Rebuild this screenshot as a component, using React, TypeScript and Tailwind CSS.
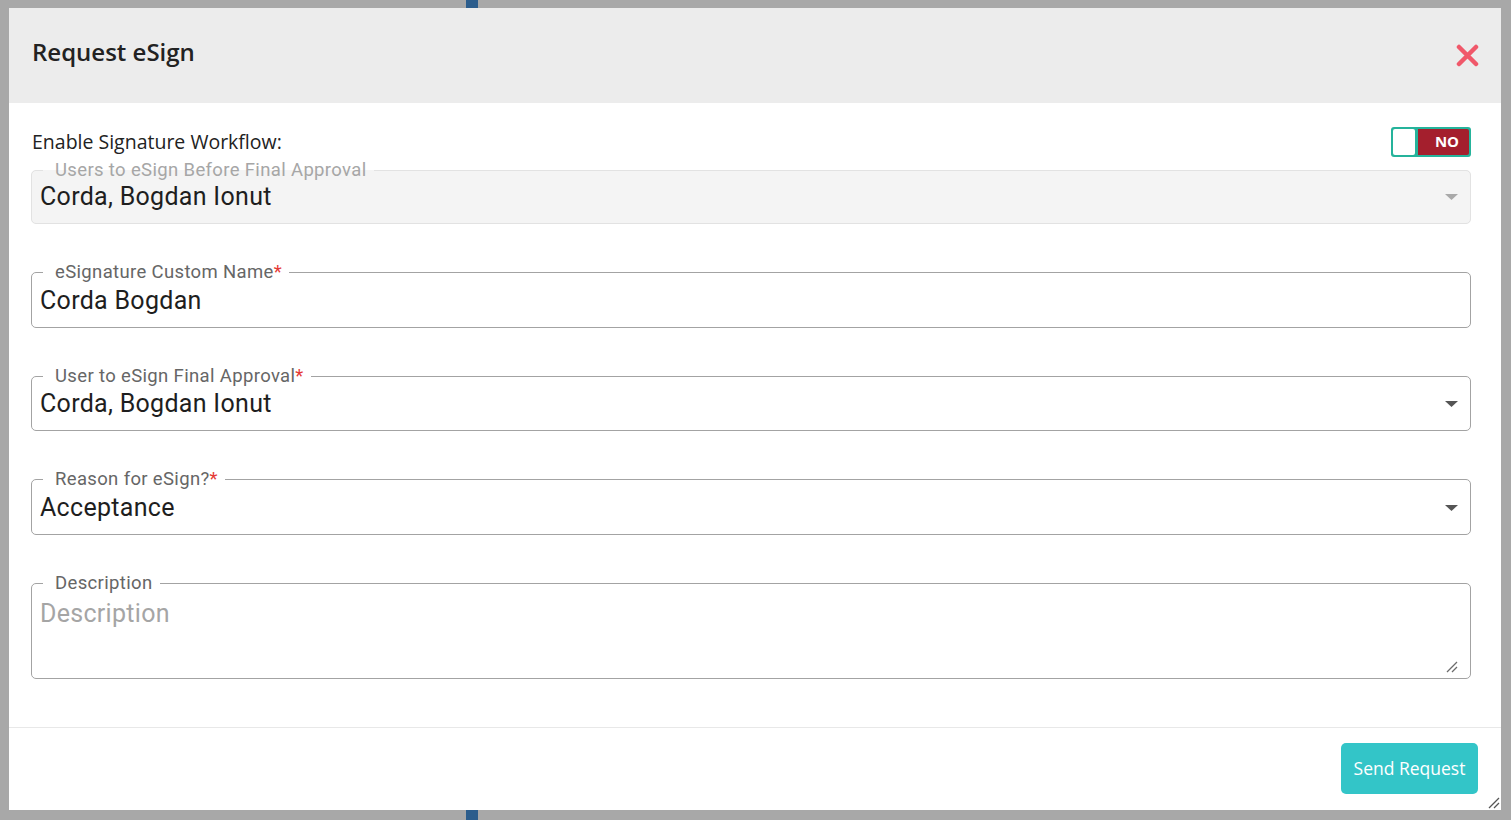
import { ReactNode } from "react";

const sans = { fontFamily: '"Open Sans", "Noto Sans", sans-serif' };
const roboto = { fontFamily: 'Roboto, "Liberation Sans", sans-serif' };

const Caret = ({ muted }: { muted?: boolean }) => (
  <svg width="13" height="6" viewBox="0 0 13 6" className="shrink-0">
    <path d="M0 0h13L6.5 6z" fill={muted ? "#a9a9a9" : "#555555"} />
  </svg>
);

interface FieldProps {
  label: string;
  required?: boolean;
  disabled?: boolean;
  children: ReactNode;
  height: string;
}

const Field = ({ label, required, disabled, children, height }: FieldProps) => (
  <fieldset
    className={`${height} min-w-0 rounded-[5px] border pl-[8px] pr-[12px] ${
      disabled ? "border-[#e2e2e2] bg-[#f4f4f4]" : "border-[#a3a3a3] bg-white"
    }`}
    style={roboto}
  >
    <legend
      className={`ml-[3px] pl-[12px] pr-[7px] text-[18.5px] leading-[20px] tracking-[0.35px] ${
        disabled ? "text-[#a6a6a6]" : "text-[#666666]"
      }`}
    >
      {label}
      {required && <span className="text-[#e53935]">*</span>}
    </legend>
    {children}
  </fieldset>
);

const Value = ({ text, caret, muted, pt }: { text: string; caret?: boolean; muted?: boolean; pt: string }) => (
  <div className={`flex items-center ${pt}`}>
    <span className="flex-1 text-[25px] leading-[28px] tracking-[0.3px] text-[#1e1e1e]">{text}</span>
    {caret && <Caret muted={muted} />}
  </div>
);

export default function App() {
  return (
    <div className="flex h-[820px] w-full flex-col bg-[#a8a8a8]">
      {/* bit of page peeking through the backdrop */}
      <div className="flex h-[8px] shrink-0">
        <div className="w-[466px]" />
        <div className="w-[12px] bg-[#2c5d8c]" />
      </div>

      <div className="flex flex-1 pl-[9px] pr-[10px]">
        <div className="flex flex-1 flex-col bg-white">
          <header className="flex h-[95px] shrink-0 items-center justify-between bg-[#ececec] pl-[23px] pr-[22px]">
            <h2 className="mb-[7px] text-[24px] font-semibold leading-none text-[#222222]" style={sans}>
              Request eSign
            </h2>
            <svg width="23" height="23" viewBox="0 0 23 23">
              <path d="M3 3l17 17M20 3L3 20" stroke="#f0586a" strokeWidth="4.5" strokeLinecap="round" />
            </svg>
          </header>

          <div className="flex flex-1 flex-col pl-[22px] pr-[30px] pt-[24px]">
            <div className="flex h-[29px] items-center justify-between">
              <span className="pl-[1px] text-[19.5px] text-[#222222]" style={sans}>
                Enable Signature Workflow:
              </span>
              <div className="flex h-[30px] w-[80px] gap-[3px] rounded-[3px] bg-[#25b39b] p-[2px]">
                <div className="w-[22px] rounded-[2px] bg-white" />
                <div
                  className="flex flex-1 items-center justify-center rounded-r-[2px] bg-[#a41f2d] pl-[7px] text-[15px] font-bold text-white"
                  style={sans}
                >
                  NO
                </div>
              </div>
            </div>

            <div className="mt-[4px] flex flex-col gap-[38px]">
              <Field label="Users to eSign Before Final Approval" disabled height="h-[64px]">
                <Value text="Corda, Bogdan Ionut" caret muted pt="pt-[3px]" />
              </Field>
              <Field label="eSignature Custom Name" required height="h-[66px]">
                <Value text="Corda Bogdan" pt="pt-[5px]" />
              </Field>
              <Field label="User to eSign Final Approval" required height="h-[65px]">
                <Value text="Corda, Bogdan Ionut" caret pt="pt-[4px]" />
              </Field>
              <Field label="Reason for eSign?" required height="h-[66px]">
                <Value text="Acceptance" caret pt="pt-[5px]" />
              </Field>
              <Field label="Description" height="h-[106px]">
                <div className="flex h-[84px] flex-col pt-[7px]">
                  <span className="text-[25px] leading-[28px] tracking-[0.3px] text-[#a5a5a5]">Description</span>
                  <svg width="12" height="12" viewBox="0 0 12 12" className="mt-auto mb-[4px] self-end">
                    <path d="M11 1L1 11M11 6L6 11" stroke="#6b6b6b" strokeWidth="1.3" />
                  </svg>
                </div>
              </Field>
            </div>
          </div>

          <footer className="flex h-[83px] shrink-0 flex-col border-t border-[#e8e8e8]">
            <div className="flex justify-end pr-[23px] pt-[15px]">
              <button
                className="h-[51px] w-[137px] rounded-[5px] bg-[#33c5c8] text-[17.5px] text-white"
                style={sans}
              >
                Send Request
              </button>
            </div>
            <div className="flex justify-end pr-[1px]">
              <svg width="12" height="12" viewBox="0 0 12 12" className="mt-[3px]">
                <path d="M11 1L1 11M11 6L6 11" stroke="#555555" strokeWidth="1.3" />
              </svg>
            </div>
          </footer>
        </div>
      </div>

      <div className="flex h-[10px] shrink-0">
        <div className="w-[466px]" />
        <div className="w-[12px] bg-[#2c5d8c]" />
      </div>
    </div>
  );
}
